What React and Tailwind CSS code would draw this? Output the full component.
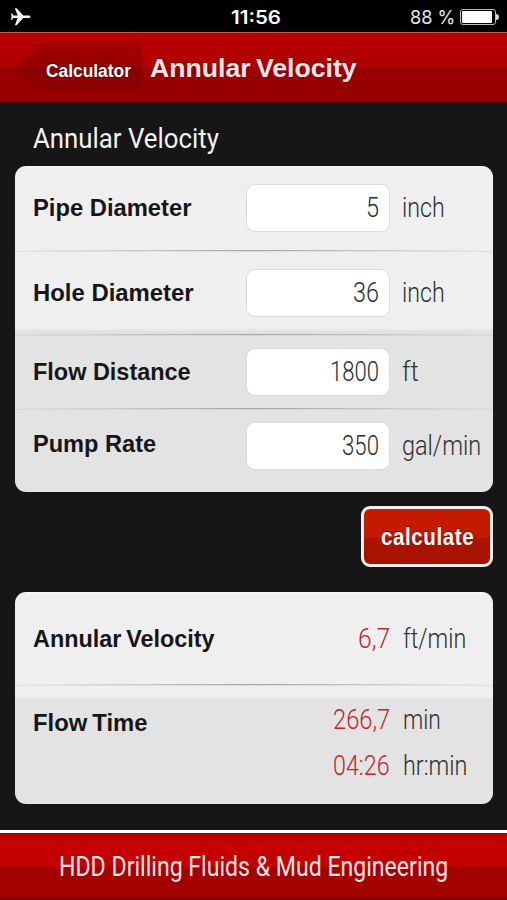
import { useLayoutEffect, useRef } from "react";
import { clsx } from "clsx";

// Text squeezed or stretched horizontally to fill the width of its box.
function Fit({ children, className }) {
  const box = useRef(null);
  const text = useRef(null);
  useLayoutEffect(() => {
    const scale = box.current.clientWidth / text.current.offsetWidth;
    text.current.style.transform = `scaleX(${scale})`;
  }, [children]);
  return (
    <span ref={box} className={clsx("block shrink-0", className)}>
      <span ref={text} className="inline-block origin-left whitespace-nowrap">
        {children}
      </span>
    </span>
  );
}

const light = "font-['Roboto',sans-serif] font-[350] text-[27px] leading-8";

function Label({ children, width }) {
  return (
    <Fit className={clsx("text-[23px] font-bold leading-7 text-[#161616]", width)}>
      {children}
    </Fit>
  );
}

function Divider() {
  return (
    <div className="h-px bg-linear-to-r from-transparent via-[#a4a4a4] to-transparent shadow-[0_1px_0_rgba(190,190,190,0.3)]" />
  );
}

function Field({ label, labelWidth, value, valueWidth, unit, unitWidth, className, labelClass }) {
  return (
    <div className={clsx("flex items-center pl-[18px]", className)}>
      <div className={clsx("w-[213px]", labelClass)}>
        <Label width={labelWidth}>{label}</Label>
      </div>
      <div className="flex h-[48px] w-[144px] items-center justify-end rounded-[9px] border border-[#dadada] bg-white pr-[10px]">
        <Fit className={clsx(light, "text-[#2c2c2c]", valueWidth)}>{value}</Fit>
      </div>
      <Fit className={clsx(light, "ml-[12px] text-[#303030]", unitWidth)}>{unit}</Fit>
    </div>
  );
}

function Result({ value, valueWidth, unit, unitWidth }) {
  return (
    <div className="flex items-center">
      <div className="flex w-[169px] justify-end">
        <Fit className={clsx(light, "text-[#c4242a]", valueWidth)}>{value}</Fit>
      </div>
      <Fit className={clsx(light, "ml-[13px] text-[#303030]", unitWidth)}>{unit}</Fit>
    </div>
  );
}

export default function App() {
  return (
    <div className="flex h-[900px] w-[507px] flex-col overflow-hidden bg-[#161616] font-['Liberation_Sans',Arial,sans-serif]">
      <div className="grid h-8 grid-cols-3 items-center bg-black pl-[10px] pr-[8px] pt-[2px] text-white">
        <svg className="h-[20px] w-[21px]" viewBox="0 0 21 20" fill="#f4f4f4">
          <path d="M20.5 9.7c0-.8-1-1.3-2.2-1.3h-5L6.6 1.2H4.8l2.9 7.2H3.5L2 6.6H.9l.8 3.1-.8 3.1H2l1.5-1.8h4.2l-2.9 7.2h1.8l6.7-7.2h5c1.2 0 2.2-.5 2.2-1.3z" />
        </svg>
        <div className="flex justify-center pl-[3px]">
          <Fit className="w-[50px] font-['Inter',sans-serif] text-[18.5px] font-semibold leading-6">11:56</Fit>
        </div>
        <div className="flex items-center justify-end">
          <Fit className="mr-[5px] w-[45px] font-['Inter',sans-serif] text-[18.5px] leading-6 text-[#e8e8e8]">88 %</Fit>
          <div className="h-[16px] w-[36px] rounded-[3px] border border-[#bdbdbd] p-px">
            <div className="h-full w-[30px] rounded-[1px] bg-white" />
          </div>
          <div className="h-[6px] w-[3px] rounded-r-full bg-[#d8d8d8]" />
        </div>
      </div>

      <div className="flex h-[71px] items-center border-b-2 border-t border-b-[#4c0605] border-t-[#c75a58] bg-[linear-gradient(to_bottom,#b80000_0,#b00000_50%,#9a0000_51%,#960000_100%)] pl-[14px]">
        <div className="flex h-[46px] w-[127px] items-center rounded-r-[5px] bg-[linear-gradient(to_bottom,#a00000_0,#980000_50%,#8a0000_51%,#8c0000_100%)] pl-[32px] pt-[7px] [clip-path:polygon(0_52%,22%_0,100%_0,100%_100%,22%_100%)]">
          <Fit className="w-[85px] text-[19px] font-bold leading-6 text-white [text-shadow:0_-1px_1px_rgba(0,0,0,0.5)]">
            Calculator
          </Fit>
        </div>
        <Fit className="ml-[9px] mt-[1px] w-[207px] text-[26px] font-bold leading-8 text-[#f5e6e6] [text-shadow:0_-1px_1px_rgba(80,0,0,0.6)] [word-spacing:-0.08em]">
          Annular Velocity
        </Fit>
      </div>

      <div className="h-[63px] pl-[33px] pt-[18px]">
        <Fit className="w-[186px] font-['Roboto',sans-serif] text-[28px] leading-9 text-[#f2f2f2]">Annular Velocity</Fit>
      </div>

      <div className="mx-[15px] mr-[14px] h-[326px] shrink-0 overflow-hidden rounded-[11px] bg-[linear-gradient(to_bottom,#fafafa_0,#efefef_3px,#efefef_162px,#e0e0e0_166px,#e3e3e3_170px,#e3e3e3_100%)]">
        <Field className="h-[84px] pb-px" label="Pipe Diameter" labelWidth="w-[158px]" value="5" valueWidth="w-[13px]" unit="inch" unitWidth="w-[43px]" />
        <Divider />
        <Field className="h-[83px]" label="Hole Diameter" labelWidth="w-[161px]" value="36" valueWidth="w-[26px]" unit="inch" unitWidth="w-[43px]" />
        <Divider />
        <Field className="h-[73px]" label="Flow Distance" labelWidth="w-[158px]" value="1800" valueWidth="w-[49px]" unit="ft" unitWidth="w-[17px]" />
        <Divider />
        <Field className="h-[83px] pb-[9px]" labelClass="pb-[4px]" label="Pump Rate" labelWidth="w-[123px]" value="350" valueWidth="w-[37px]" unit="gal/min" unitWidth="w-[79px]" />
      </div>

      <div className="flex h-[100px] shrink-0 justify-end pr-[14px] pt-[14px]">
        <div className="flex h-[61px] w-[132px] items-center justify-center rounded-[9px] border-[3px] border-[#f6eeee] bg-[linear-gradient(to_bottom,#d02010_0,#c41a00_5%,#c41a00_50%,#aa1400_54%,#a61200_100%)]">
          <Fit className="w-[93px] text-[24px] font-bold leading-8 tracking-[0.03em] text-white [text-shadow:0_-1px_1px_rgba(80,0,0,0.6)]">calculate</Fit>
        </div>
      </div>

      <div className="mx-[15px] mr-[14px] h-[212px] shrink-0 overflow-hidden rounded-[11px] bg-[linear-gradient(to_bottom,#fafafa_0,#efefef_3px,#efefef_105px,#e3e3e3_107px,#e3e3e3_100%)]">
        <div className="flex h-[92px] items-center pl-[18px] pt-[2px]">
          <div className="w-[188px] [word-spacing:-0.1em]">
            <Label width="w-[182px]">Annular Velocity</Label>
          </div>
          <Result value="6,7" valueWidth="w-[32px]" unit="ft/min" unitWidth="w-[63px]" />
        </div>
        <Divider />
        <div className="flex h-[119px] pl-[18px]">
          <div className="w-[188px] pt-[24px] [word-spacing:-0.1em]">
            <Label width="w-[114px]">Flow Time</Label>
          </div>
          <div className="flex flex-col gap-[14px] pt-[19px]">
            <Result value="266,7" valueWidth="w-[57px]" unit="min" unitWidth="w-[38px]" />
            <Result value="04:26" valueWidth="w-[57px]" unit="hr:min" unitWidth="w-[64px]" />
          </div>
        </div>
      </div>

      <div className="mt-[26px] flex h-[70px] shrink-0 justify-center border-t-[3px] border-white bg-[linear-gradient(to_bottom,#7a1010_0,#c40000_2px,#c40000_33px,#a40000_34px,#a40000_64px,#700000_66px)] pt-[16px]">
        <Fit className="w-[389px] font-['Roboto',sans-serif] text-[27px] leading-9 text-[#ffe4e4]">
          HDD Drilling Fluids &amp; Mud Engineering
        </Fit>
      </div>
    </div>
  );
}
